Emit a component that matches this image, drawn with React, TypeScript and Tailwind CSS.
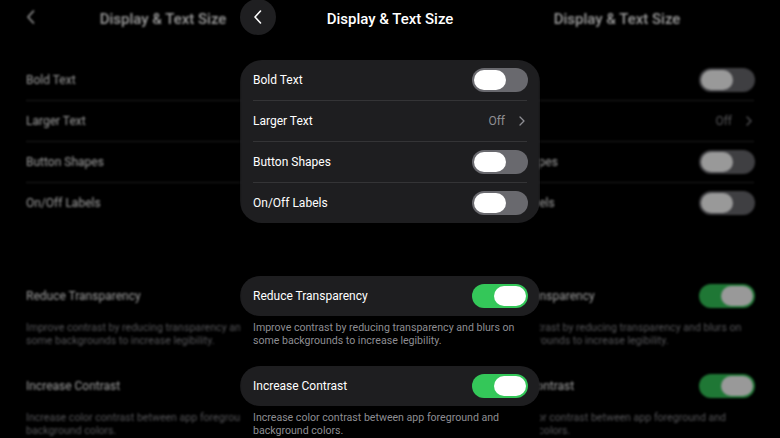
import React from "react";

const font = { fontFamily: "Roboto, 'Noto Sans', sans-serif" };

const Toggle: React.FC<{ on?: boolean }> = ({ on }) => (
  <div
    className={`flex h-[24px] w-[56px] shrink-0 items-center rounded-full p-[2px] ${
      on ? "justify-end bg-[#34c759]" : "justify-start bg-[#69696e]"
    }`}
  >
    <div className="h-[20px] w-[32px] rounded-full bg-white" />
  </div>
);

const Row: React.FC<{ label: string; children?: React.ReactNode }> = ({ label, children }) => (
  <div className="flex h-[40px] items-center justify-between pl-[13px] pr-[12px]">
    <span className="text-[12px] text-white">{label}</span>
    {children}
  </div>
);

const Divider = () => <div className="mx-[13px] h-px bg-[#343436]" />;

const Screen: React.FC<{ dim?: boolean }> = ({ dim }) => {
  const card = dim ? "bg-black" : "bg-[#1e1e20]";
  return (
    <div className="flex w-[300px] shrink-0 flex-col bg-black" style={font}>
      <div className="relative mt-[1px] flex h-[36px] items-center justify-center">
        <div
          className={`absolute left-0 top-[-2px] flex h-[36px] w-[36px] items-center justify-center rounded-full ${
            dim ? "bg-black" : "bg-[#1f1f21]"
          }`}
        >
          <svg width="10" height="16" viewBox="0 0 10 16" fill="none">
            <polyline points="7.5,2 2,8 7.5,14" stroke="white" strokeWidth="1.6" strokeLinecap="round" strokeLinejoin="round" />
          </svg>
        </div>
        <span className="text-[15px] font-medium text-white">Display &amp; Text Size</span>
      </div>

      <div className={`mt-[23px] overflow-hidden rounded-[22px] ${card}`}>
        <Row label="Bold Text">
          <Toggle />
        </Row>
        <Divider />
        <Row label="Larger Text">
          <div className="flex items-center gap-[14px] pr-[3px]">
            <span className="text-[12px] text-[#8e8e93]">Off</span>
            <svg width="6" height="10" viewBox="0 0 6 10" fill="none">
              <polyline points="1,1 5,5 1,9" stroke="#8e8e93" strokeWidth="1.3" strokeLinecap="round" strokeLinejoin="round" />
            </svg>
          </div>
        </Row>
        <Divider />
        <Row label="Button Shapes">
          <Toggle />
        </Row>
        <Divider />
        <Row label="On/Off Labels">
          <Toggle />
        </Row>
      </div>

      <div className={`mt-[53px] rounded-full ${card}`}>
        <Row label="Reduce Transparency">
          <Toggle on />
        </Row>
      </div>
      <p className="px-[13px] pt-[5px] text-[10.6px] leading-[13px] text-[#8d8d92]">
        Improve contrast by reducing transparency and blurs on some backgrounds to increase legibility.
      </p>

      <div className={`mt-[19px] rounded-full ${card}`}>
        <Row label="Increase Contrast">
          <Toggle on />
        </Row>
      </div>
      <p className="px-[13px] pt-[5px] text-[10.6px] leading-[13px] text-[#8d8d92]">
        Increase color contrast between app foreground and background colors.
      </p>
    </div>
  );
};

export default function App() {
  return (
    <div className="flex h-[438px] w-[780px] overflow-hidden bg-black">
      <div className="flex w-[240px] shrink-0 overflow-hidden pl-[13px] opacity-60 blur-[1px]" aria-hidden>
        <Screen dim />
      </div>
      <Screen />
      <div className="flex w-[240px] shrink-0 overflow-hidden opacity-60 blur-[1px]" aria-hidden>
        <div className="-ml-[73px] flex">
          <Screen dim />
        </div>
      </div>
    </div>
  );
}
